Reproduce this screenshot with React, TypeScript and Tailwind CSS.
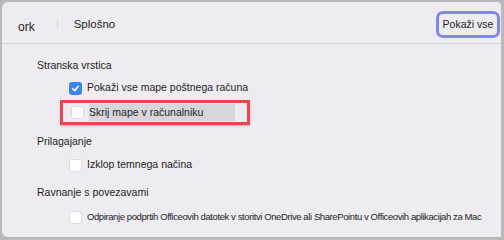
import React from "react";

function Box({ checked = false }: { checked?: boolean }) {
  if (checked) {
    return (
      <div className="w-[13px] h-[13px] rounded-[3px] bg-[#3b82f6] flex items-center justify-center shrink-0">
        <svg width="9" height="9" viewBox="0 0 10 10" fill="none">
          <path d="M2 5.3 L4.2 7.5 L8 2.5" stroke="white" strokeWidth="1.8" strokeLinecap="round" strokeLinejoin="round" />
        </svg>
      </div>
    );
  }
  return <div className="w-[13px] h-[13px] rounded-[3px] bg-white border border-[#dcdadf] shrink-0" />;
}

export default function App() {
  return (
    <div className="w-[504px] h-[240px] bg-[#b9b8bb] pl-[2px] pt-[2px] pr-[3px] pb-[3px]" style={{ fontFamily: '"Liberation Sans", Arial, sans-serif' }}>
      <div className="w-full h-full bg-[#eeecf1] rounded-tl-[6px] rounded-bl-[6px] rounded-tr-[4px] flex flex-col text-[#1d1d1f]">
        <div className="h-[42px] shrink-0 flex items-center border-b border-[#d5d3d8] pr-[1px]">
          <span className="ml-[16px] text-[12px] mt-[8px]">ork</span>
          <div className="ml-[22px] w-px h-[8px] bg-[#d0ced3] mt-[2px]" />
          <span className="ml-[16px] text-[11.5px] mt-[5px]">Splošno</span>
          <div className="ml-auto h-[27px] w-[64px] justify-center flex items-center rounded-[7px] border-[3px] border-[#7e88e6] text-[10.5px] mt-[4px]">Pokaži vse</div>
        </div>
        <div className="flex flex-col pl-[35px] pt-[13px] text-[10.5px]">
          <div className="h-[18px] flex items-center">Stranska vrstica</div>
          <div className="h-[16px] mt-[5px] flex items-center pl-[32px] gap-[5px]">
            <Box checked />
            <span>Pokaži vse mape poštnega računa</span>
          </div>
          <div className="ml-[23px] w-[190px] h-[25px] mt-[4px] border-[3px] border-[#e9474c] flex items-center pl-[8px] gap-[5px] shadow-[0_1px_2px_rgba(0,0,0,0.25)]">
            <Box />
            <span className="bg-[#d8d6db] w-[146px] h-[17px] flex items-center">Skrij mape v računalniku</span>
          </div>
          <div className="h-[18px] mt-[8px] flex items-center">Prilagajanje</div>
          <div className="h-[16px] mt-[6px] flex items-center pl-[32px] gap-[5px]">
            <Box />
            <span>Izklop temnega načina</span>
          </div>
          <div className="h-[18px] mt-[11px] flex items-center">Ravnanje s povezavami</div>
          <div className="h-[16px] mt-[7px] flex items-center pl-[32px] gap-[5px]">
            <Box />
            <span className="text-[9.5px] tracking-[-0.4px] whitespace-nowrap">Odpiranje podprtih Officeovih datotek v storitvi OneDrive ali SharePointu v Officeovih aplikacijah za Mac</span>
          </div>
        </div>
      </div>
    </div>
  );
}
